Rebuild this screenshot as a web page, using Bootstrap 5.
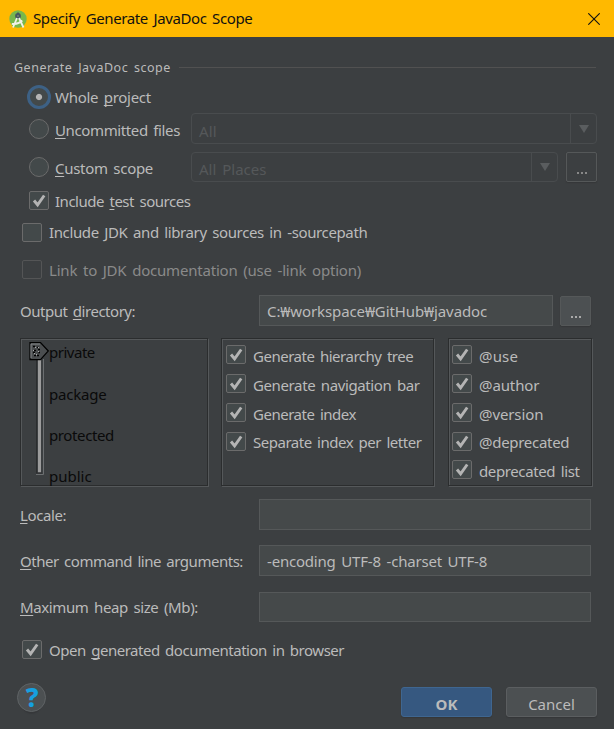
<!DOCTYPE html>
<html lang="en">
<head>
<meta charset="utf-8">
<meta name="viewport" content="width=device-width, initial-scale=1">
<title>Specify Generate JavaDoc Scope</title>
<link href="https://cdn.jsdelivr.net/npm/bootstrap@5.3.0/dist/css/bootstrap.min.css" rel="stylesheet">
<style>
body{background:#3c3f41;color:#bbb;font:15px/20px "Noto Sans","Noto Sans CJK KR",sans-serif;width:614px;height:729px;overflow:hidden}
.titlebar{height:37px;background:#ffb900;color:#111;padding:0 14px 0 9px}
.titlebar .txt{margin-left:6px;top:-1px}
.txt{white-space:pre;word-spacing:2px;position:relative;top:0}
.low{top:1px}
.up{top:-1px}
.txt u{text-underline-offset:2px;text-decoration-thickness:1px;text-decoration-skip-ink:none}
.n0{letter-spacing:-.1px}.n1{letter-spacing:-.2px}.n2{letter-spacing:-.29px}.n3{letter-spacing:-.38px}.n4{letter-spacing:-.48px}
.p1{letter-spacing:.15px}.p2{letter-spacing:.4px}
.legend-row{height:20px;margin:20px 18px 0 14px;font-size:12.5px}
.legend-row .txt{letter-spacing:.5px;top:1px}
.rule{height:1px;background:#515151;margin-left:8px}
.h28{height:28px}.h30{height:30px}.h31{height:31px}
.line{display:flex;align-items:center}
.ind{padding:0 17px 0 29px}
.edge{padding:0 23px 0 20px}
.opt{padding-left:22px}
.mt1{margin-top:1px}.mt9{margin-top:9px}.mt12{margin-top:12px}.mt15{margin-top:15px}.mt13{margin-top:13px}
.rad{width:20px;height:20px;border:1px solid #6b6b6b;border-radius:50%;background:#43494a;margin-right:6px;flex:none}
.rad.on{width:24px;height:24px;border:3px solid #3d6185;margin:0 4px 0 -2px;background:radial-gradient(circle at center,#b4b4b4 0 2.6px,#43494a 3.6px)}
.chk{width:20px;height:19px;border:1px solid #6b6b6b;border-radius:2px;background:#43494a;flex:none;margin-right:7px}
.ind .chk{margin-right:6px}
.chk svg{display:block;width:18px;height:17px}
.chk.off{background:#3c3f41;border-color:#545556}
.dim{color:#8a8a8a}
.combo{border:1px solid #494c4e;border-radius:4px;color:#55585a;padding-left:7px}
.combo .txt{top:2px}
.combo-u{width:406px}
.combo-c{width:367px}
.arrow{width:26px;height:100%;border-left:1px solid #494c4e}
.fld{border:1px solid #555859;background:#45494a;padding-left:7px;width:332px;color:#bbb}
.fld.dir{width:294px}
.lab{width:239px;flex:none}
.dots{border:1px solid #555859;border-radius:2px;width:31px;height:30px;box-shadow:0 1px 1px #353739;padding:12px 0 0 1px}
.dots i{width:2px;height:2px;background:#888;margin:0 1px}
.dots.fill{background:#4c5052}
.dots.fill i{background:#aaa}
.panes{margin:12px 20px 0;height:149px}
.pane{border:1px solid #2b2d2e;box-shadow:inset 1px 1px 0 #55585a,1px 1px 0 #55585a;height:148px}
.pane-a{width:188px}.pane-b{width:213px;padding:2px 0 0 4px}.pane-c{width:144px;padding:2px 0 0 3px}
.pane-b{margin-left:13px}.pane-c{margin-left:14px}
.pane-b .line,.pane-c .line{height:28.700px}
.pane-b .chk,.pane-c .chk{position:relative;top:-.4px}
.pane-b .txt,.pane-c .txt{top:.8px}
.lvls{color:#0a0a0a;padding:3px 0 0}
.lvls .txt{display:block;margin-bottom:21.500px}
.slider{margin:3px 0 0 8px}
.push{font-size:15px;line-height:20px;border-radius:3px;border:1px solid #5b5e60;background:#4c5052;color:#bbb;width:91px;height:30px;padding:3px 0 0;box-shadow:0 1px 1px #353739}
.push.ok{background:#365880;border-color:#3f6690;font-weight:700}
.foot{margin:24px 17px 0;gap:14px}
.help{width:29px;height:29px;border-radius:50%;border:1px solid #5f6365;background:#4c5052;color:#16a0e0;font-weight:800;font-size:26px;line-height:26px;padding-left:1px;margin-top:-4px;box-shadow:0 7px 1px -5px #36383a}
</style>
</head>
<body>
<svg width="0" height="0" class="position-absolute"><defs><path id="tick" d="M4 8.500 7.600 12.800 14.200 3.500" fill="none" stroke="#b4b4b4" stroke-width="2.900"/><path id="down" d="M0 0h10L5 8z" fill="#5a5d5f"/></defs></svg>
<header class="titlebar d-flex align-items-center">
  <svg width="18" height="18" viewBox="0 0 18 18"><circle cx="9" cy="9" r="8.700" fill="#78b84c"/><circle cx="9" cy="6" r="2.900" fill="#475560"/><path d="M9 2.500v2" stroke="#475560" stroke-width="1.800"/><circle cx="9" cy="6" r="1" fill="#6f8a6a"/><path d="M8 8 4 17.500M10 8l4.500 9.500M2.800 13.800q6 1 10.500-3.300" fill="none" stroke="#f1f1e8" stroke-width="1.800"/></svg>
  <span class="txt n3">Specify Generate JavaDoc Scope</span>
  <svg class="ms-auto" width="12" height="12" viewBox="0 0 12 12"><path d="M.3.3l11.400 11.400M11.700.3.3 11.700" stroke="#111" stroke-width="1.100"/></svg>
</header>
<main>
  <div class="legend-row line"><span class="txt">Generate JavaDoc scope</span><span class="rule flex-grow-1"></span></div>
  <div class="ind line h31 mt-1"><span class="rad on"></span><span class="txt n2">Whole <u>p</u>roject</span></div>
  <div class="ind line h31 mt1"><span class="rad"></span><span class="txt low n3"><u>U</u>ncommitted files</span>
    <div class="combo combo-u line h31 ms-auto"><span class="txt p1">All</span><span class="arrow ms-auto d-flex align-items-center justify-content-center"><svg width="10" height="8"><use href="#down"/></svg></span></div></div>
  <div class="ind line h30 mt-2"><span class="rad"></span><span class="txt low n2"><u>C</u>ustom scope</span>
    <div class="combo combo-c line h30 ms-auto"><span class="txt">All Places</span><span class="arrow ms-auto d-flex align-items-center justify-content-center"><svg width="10" height="8"><use href="#down"/></svg></span></div>
    <div class="dots line justify-content-center ms-2"><i></i><i></i><i></i></div></div>
  <div class="ind line h28 mt-1"><span class="chk"><svg><use href="#tick"/></svg></span><span class="txt low n4">Include <u>t</u>est sources</span></div>
  <div class="opt line h28 mt-1"><span class="chk"></span><span class="txt n3">Include JDK and library sources in -sourcepath</span></div>
  <div class="opt line h28 mt9"><span class="chk off"></span><span class="txt low n1 dim">Link to JDK documentation (use -link option)</span></div>
  <div class="edge line h31 mt12"><span class="lab"><span class="txt n4">Output <u>d</u>irectory:</span></span><div class="fld dir line h31"><span class="txt n0">C:₩workspace₩GitHub₩javadoc</span></div><div class="dots fill line justify-content-center ms-auto"><i></i><i></i><i></i></div></div>
  <div class="panes d-flex">
    <div class="pane pane-a d-flex">
      <svg class="slider" width="20" height="133" viewBox="0 0 20 133">
        <path d="M7.500 17V131.500" stroke="#2b2d2e"/><path d="M10.500 17V130.500" stroke="#9c9c9c" stroke-width="3"/><path d="M8 131h5" stroke="#2b2d2e"/><path d="M14.500 17V132.500H7" fill="none" stroke="#6c6f71"/>
        <path d="M1 .7h10.500l7.800 8.300-7.800 8.700H1z" fill="#4b4e50" stroke="#000" stroke-width="1.200"/><path d="M2 16V2h9" fill="none" stroke="#85888a"/>
        <path d="M4 4.500h2m2 1h2m-5 3h2m2-1h2m-7 3h2m3 0h2m-6 3h2m1 0h2" stroke="#000" stroke-width="1.600"/><path d="M6 5.500h1m-3 3h1m4 1.200h1m-3 3h1m-3-1h1m3-6h1" stroke="#aaa" stroke-width="1.200"/>
      </svg>
      <div class="lvls"><span class="txt n4">private</span><span class="txt n1">package</span><span class="txt n3">protected</span><span class="txt up">public</span></div>
    </div>
    <div class="pane pane-b">
      <div class="line"><span class="chk"><svg><use href="#tick"/></svg></span><span class="txt n4">Generate hierarchy tree</span></div>
      <div class="line"><span class="chk"><svg><use href="#tick"/></svg></span><span class="txt n3">Generate navigation bar</span></div>
      <div class="line"><span class="chk"><svg><use href="#tick"/></svg></span><span class="txt n4">Generate index</span></div>
      <div class="line"><span class="chk"><svg><use href="#tick"/></svg></span><span class="txt n4">Separate index per letter</span></div>
    </div>
    <div class="pane pane-c">
      <div class="line"><span class="chk"><svg><use href="#tick"/></svg></span><span class="txt p1">@use</span></div>
      <div class="line"><span class="chk"><svg><use href="#tick"/></svg></span><span class="txt n0">@author</span></div>
      <div class="line"><span class="chk"><svg><use href="#tick"/></svg></span><span class="txt n0">@version</span></div>
      <div class="line"><span class="chk"><svg><use href="#tick"/></svg></span><span class="txt n2">@deprecated</span></div>
      <div class="line"><span class="chk"><svg><use href="#tick"/></svg></span><span class="txt n3">deprecated list</span></div>
    </div>
  </div>
  <div class="edge line h31 mt12"><span class="lab"><span class="txt n3"><u>L</u>ocale:</span></span><div class="fld h31"></div></div>
  <div class="edge line h31 mt15"><span class="lab"><span class="txt n4"><u>O</u>ther command line arguments:</span></span><div class="fld line h31"><span class="txt n1">-encoding UTF-8 -charset UTF-8</span></div></div>
  <div class="edge line h30 mt-3"><span class="lab"><span class="txt n3"><u>M</u>aximum heap size (Mb):</span></span><div class="fld h30"></div></div>
  <div class="opt line h28 mt13"><span class="chk"><svg><use href="#tick"/></svg></span><span class="txt low n4">Open <u>g</u>enerated documentation in browser</span></div>
  <div class="foot d-flex"><span class="help text-center">?</span><button class="push ok ms-auto">OK</button><button class="push">Cancel</button></div>
</main>
<script src="https://cdn.jsdelivr.net/npm/bootstrap@5.3.0/dist/js/bootstrap.bundle.min.js"></script>
</body>
</html>
